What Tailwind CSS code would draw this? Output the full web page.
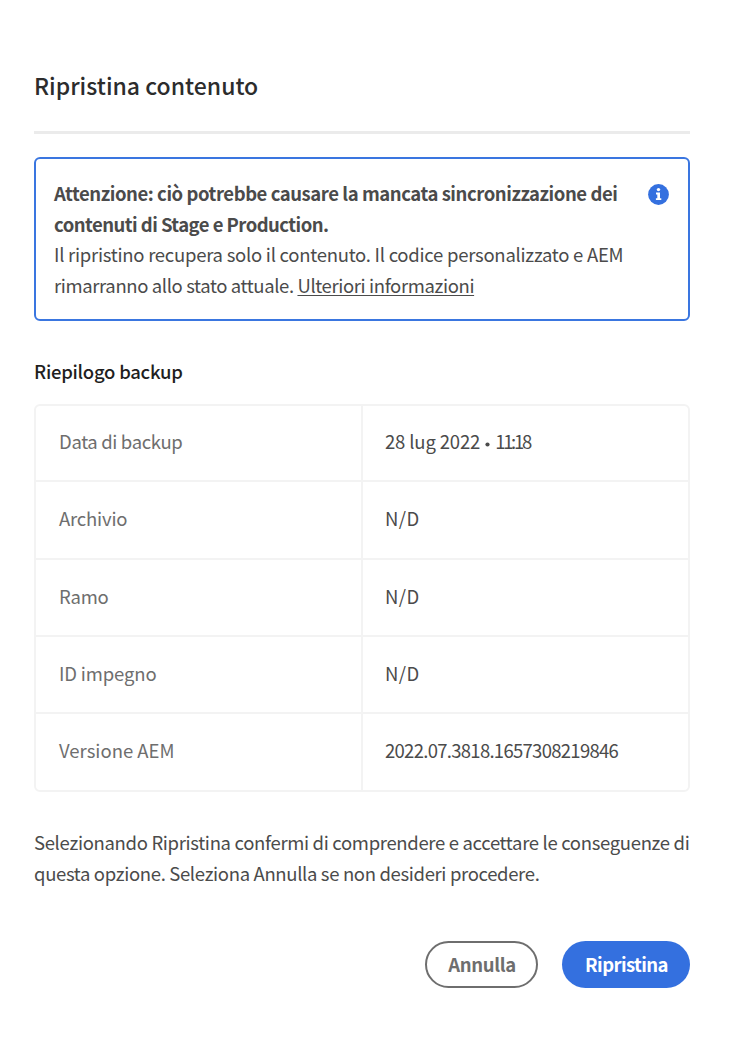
<!DOCTYPE html>
<html lang="it"><head><meta charset="utf-8"><title>Ripristina contenuto</title>
<script src="https://cdn.jsdelivr.net/npm/@tailwindcss/browser@4"></script></head>
<body class="bg-white font-['Noto_Sans_CJK_SC',sans-serif] text-[#4b4b4b]">
<main class="h-[1042px] w-[738px] overflow-hidden pr-[48px] pl-[34px] pt-[65px] text-[18.5px] leading-[30.5px] whitespace-nowrap">
<h1 class="h-[66px] text-[23px] leading-[40px] font-medium text-[#2c2c2c]">Ripristina contenuto</h1>
<hr class="h-[3px] border-0 bg-[#ebebeb]">
<section class="mt-[23px] flex h-[164px] justify-between rounded-[6px] border-2 border-[#3a76e0] pt-[19px] pr-[19.5px] pl-[18px]">
<div>
<p class="font-bold"><span class="tracking-[-0.44px]">Attenzione: ciò potrebbe causare la mancata sincronizzazione dei</span><br><span class="tracking-[-0.53px]">contenuti di Stage e Production.</span></p>
<p><span class="tracking-[-0.26px]">Il ripristino recupera solo il contenuto. Il codice personalizzato e AEM</span><br><span class="tracking-[-0.385px]">rimarranno allo stato attuale. </span><a class="tracking-[-0.38px] underline decoration-1 underline-offset-2">Ulteriori informazioni</a></p>
</div>
<svg class="mt-[6px] h-[21px] w-[21px] shrink-0" viewBox="0 0 21 21"><circle cx="10.5" cy="10.5" r="10.4" fill="#3470df"/><circle cx="10.5" cy="5.6" r="1.7" fill="#fff"/><path d="M8 8.6h4v5.6h1.3v1.8H7.9v-1.8h1.4v-3.8H8z" fill="#fff"/></svg>
</section>
<h2 class="mt-[35px] h-[31px] font-medium tracking-[-0.26px] text-[#1f1f1f]">Riepilogo backup</h2>
<dl class="mt-[17px] grid h-[388px] grid-cols-[327px_1fr] grid-rows-[76px_78px_77px_77px_76px] rounded-[6px] border-2 border-[#f3f3f3] *:flex *:items-center *:border-[#f3f3f3] *:pb-[3px]">
<dt class="border-r-2 border-b-2 pl-[23px] text-[#6e6e6e] tracking-[-0.35px]">Data di backup</dt>
<dd class="border-b-2 pl-[22px]"><span class="tracking-[-0.15px]">28 lug 2022</span><svg class="mx-[5px] mt-[5px] h-[5px] w-[5px]" viewBox="0 0 5 5"><circle cx="2.5" cy="2.5" r="2.1" fill="#4b4b4b"/></svg><span class="tracking-[-2.3px]">11:18</span></dd>
<dt class="border-r-2 border-b-2 pl-[23px] text-[#6e6e6e] tracking-[-0.2px]">Archivio</dt>
<dd class="border-b-2 pl-[22px] tracking-[0.4px]">N/D</dd>
<dt class="border-r-2 border-b-2 pl-[23px] text-[#6e6e6e] tracking-[-0.2px]">Ramo</dt>
<dd class="border-b-2 pl-[22px] tracking-[0.4px]">N/D</dd>
<dt class="border-r-2 border-b-2 pl-[23px] text-[#6e6e6e] tracking-[-0.15px]">ID impegno</dt>
<dd class="border-b-2 pl-[22px] tracking-[0.4px]">N/D</dd>
<dt class="border-r-2 pl-[23px] text-[#6e6e6e]">Versione AEM</dt>
<dd class="pl-[22px] tracking-[-0.71px]">2022.07.3818.1657308219846</dd>
</dl>
<p class="mt-[35px]"><span class="tracking-[-0.33px]">Selezionando Ripristina confermi di comprendere e accettare le conseguenze di</span><br><span class="tracking-[-0.345px]">questa opzione. Seleziona Annulla se non desideri procedere.</span></p>
<div class="mt-[53px] flex justify-end gap-6 font-bold">
<button class="h-[47px] w-[113px] rounded-full border-[2px] border-[#6e6e6e] pl-px tracking-[-0.36px] text-[#6e6e6e]">Annulla</button>
<button class="h-[47px] w-[128px] rounded-full bg-[#3470df] pl-px tracking-[-0.6px] text-white">Ripristina</button>
</div>
</main>
</body></html>
